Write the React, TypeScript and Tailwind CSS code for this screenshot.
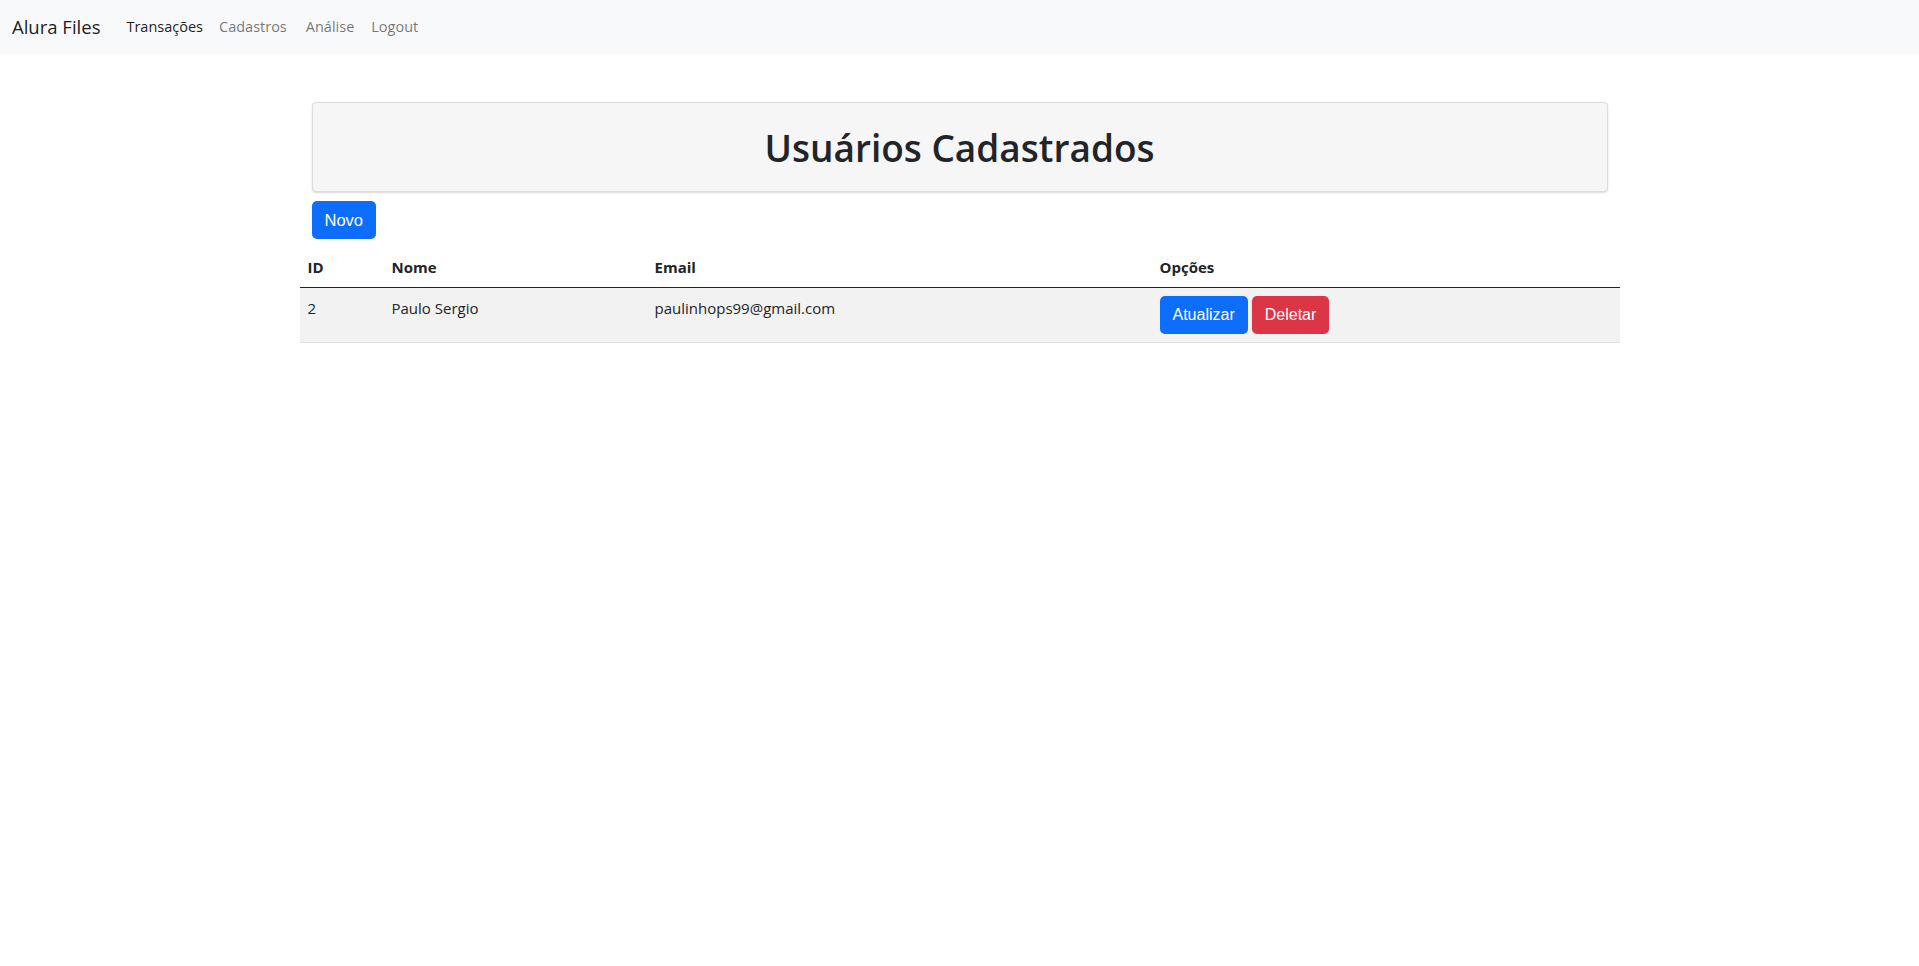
import React from "react";

const sans = { fontFamily: '"Open Sans", "Noto Sans", sans-serif' };
const btnFont = { fontFamily: '"Liberation Sans", Arial, sans-serif' };

export default function App() {
  return (
    <div className="min-h-[966px] bg-white text-[#212529]" style={sans}>
      <nav className="h-[54px] bg-[#f8f9fa] flex items-center pl-[12px]">
        <span className="text-[18.5px] text-[rgba(0,0,0,0.9)] mr-[26px]">Alura Files</span>
        <div className="flex items-center text-[14.5px]">
          <span className="text-[rgba(0,0,0,0.9)] mr-[16px]">Transações</span>
          <span className="text-[rgba(0,0,0,0.55)] mr-[19px]">Cadastros</span>
          <span className="text-[rgba(0,0,0,0.55)] mr-[17px]">Análise</span>
          <span className="text-[rgba(0,0,0,0.55)]">Logout</span>
        </div>
      </nav>

      <main className="w-[1320px] mx-auto pt-[48px]">
        <div className="px-[12px]">
          <div className="h-[90px] bg-[#f6f6f6] border border-[#dddddd] rounded-[4px] shadow-[0_1px_2px_rgba(0,0,0,0.15)] flex items-center justify-center">
            <h1 className="text-[37px] font-semibold leading-none text-[#212529]">Usuários Cadastrados</h1>
          </div>
          <button
            className="mt-[9px] h-[38px] px-[13px] bg-[#0d6efd] text-white text-[16.5px] rounded-[5px]"
            style={btnFont}
          >
            Novo
          </button>
        </div>

        <table className="mt-[8px] w-[1320px] border-collapse text-[15px] text-left">
          <colgroup>
            <col className="w-[84px]" />
            <col className="w-[263px]" />
            <col className="w-[505px]" />
            <col className="w-[468px]" />
          </colgroup>
          <thead>
            <tr className="border-b border-[#212529]">
              <th className="px-[8px] py-[8px] leading-[24px] font-bold">ID</th>
              <th className="px-[8px] py-[8px] leading-[24px] font-bold">Nome</th>
              <th className="px-[8px] py-[8px] leading-[24px] font-bold">Email</th>
              <th className="px-[8px] py-[8px] leading-[24px] font-bold">Opções</th>
            </tr>
          </thead>
          <tbody>
            <tr className="bg-[#f2f2f2] border-b border-[#dee2e6]">
              <td className="px-[8px] py-[8px] leading-[24px] align-top">2</td>
              <td className="px-[8px] py-[8px] leading-[24px] align-top">Paulo Sergio</td>
              <td className="px-[8px] py-[8px] leading-[24px] align-top">paulinhops99@gmail.com</td>
              <td className="px-[8px] py-[8px] align-top">
                <div className="flex gap-[4px]" style={btnFont}>
                  <button className="h-[38px] px-[13px] bg-[#0d6efd] text-white text-[16px] rounded-[5px]">Atualizar</button>
                  <button className="h-[38px] px-[13px] bg-[#dc3545] text-white text-[16px] rounded-[5px]">Deletar</button>
                </div>
              </td>
            </tr>
          </tbody>
        </table>
      </main>
    </div>
  );
}
